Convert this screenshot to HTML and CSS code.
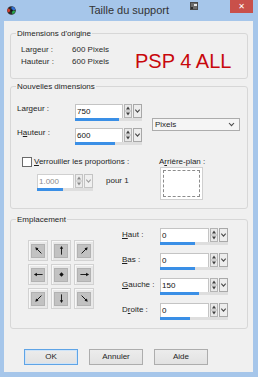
FILE: index.html
```html
<!DOCTYPE html>
<html lang="fr">
<head>
<meta charset="utf-8">
<title>Taille du support</title>
<link rel="stylesheet" href="styles.css">
</head>
<body>
<div class="window">
  <div class="titlebar">
    <div class="tb-left">
      <svg class="appicon" width="9" height="9" viewBox="0 0 9 9">
        <circle cx="4.5" cy="4.5" r="4.3" fill="#2b2b2b"/>
        <path d="M4.5 4.5 L4.5 0.6 A3.9 3.9 0 0 1 8.3 4 Z" fill="#2f6fd6"/>
        <path d="M4.5 4.5 L8.3 4.8 A3.9 3.9 0 0 1 5.5 8.3 Z" fill="#27a84a"/>
        <path d="M4.5 4.5 L1 6.5 A3.9 3.9 0 0 1 1 2.3 Z" fill="#d23b2c"/>
        <circle cx="4.5" cy="4.5" r="1.3" fill="#111"/>
      </svg>
    </div>
    <div class="title">Taille du support</div>
    <div class="tb-right">
      <svg class="helpicon" width="8" height="8" viewBox="0 0 8 8">
        <rect x="0" y="0" width="8" height="8" fill="#4a4a4a"/>
        <rect x="1" y="1" width="6" height="6" fill="#6d6d6d"/>
        <rect x="4" y="2" width="3" height="2" fill="#e8e8e8"/>
        <rect x="1" y="5" width="2" height="2" fill="#2e2e2e"/>
      </svg>
      <div class="close">✕</div>
    </div>
  </div>

  <div class="client">
    <fieldset class="group g1">
      <legend>Dimensions d'origine</legend>
      <div class="g1-body">
        <div class="orig">
          <span>Largeur :</span><span>600 Pixels</span>
          <span>Hauteur :</span><span>600 Pixels</span>
        </div>
        <div class="brand">PSP 4 ALL</div>
      </div>
    </fieldset>

    <fieldset class="group g2">
      <legend>Nouvelles dimensions</legend>
      <div class="g2-body">
        <div class="dims">
          <span class="lbl">Lar<u>g</u>eur :</span>
          <div class="ctl w67">
            <div class="ctl-top">
              <div class="field">750</div>
              <svg class="spin" width="8" height="14" viewBox="0 0 8 14"><rect x="0.5" y="0.5" width="7" height="13" fill="#e9e9e9" stroke="#b4b4b4"/><line x1="1" y1="7" x2="7" y2="7" stroke="#b4b4b4"/><path d="M4 2.5 L6 5.5 L2 5.5 Z" fill="#404040"/><path d="M2 8.5 L6 8.5 L4 11.5 Z" fill="#404040"/></svg>
              <svg class="drop" width="9" height="14" viewBox="0 0 9 14"><rect x="0.5" y="0.5" width="8" height="13" fill="#ededed" stroke="#a8a8a8"/><polyline points="2.3,5.6 4.5,8.2 6.7,5.6" fill="none" stroke="#4a4a4a" stroke-width="1.1"/></svg>
            </div>
            <div class="bar"><div class="fill" style="width:66%"></div></div>
          </div>
          <div class="select">
            <span>Pixels</span>
            <svg width="7" height="5" viewBox="0 0 7 5"><polyline points="1,1 3.5,3.7 6,1" fill="none" stroke="#4a4a4a" stroke-width="1.1"/></svg>
          </div>
          <span class="lbl">H<u>a</u>uteur :</span>
          <div class="ctl w67">
            <div class="ctl-top">
              <div class="field">600</div>
              <svg class="spin" width="8" height="14" viewBox="0 0 8 14"><rect x="0.5" y="0.5" width="7" height="13" fill="#e9e9e9" stroke="#b4b4b4"/><line x1="1" y1="7" x2="7" y2="7" stroke="#b4b4b4"/><path d="M4 2.5 L6 5.5 L2 5.5 Z" fill="#404040"/><path d="M2 8.5 L6 8.5 L4 11.5 Z" fill="#404040"/></svg>
              <svg class="drop" width="9" height="14" viewBox="0 0 9 14"><rect x="0.5" y="0.5" width="8" height="13" fill="#ededed" stroke="#a8a8a8"/><polyline points="2.3,5.6 4.5,8.2 6.7,5.6" fill="none" stroke="#4a4a4a" stroke-width="1.1"/></svg>
            </div>
            <div class="bar"><div class="fill" style="width:60%"></div></div>
          </div>
        </div>

        <div class="lower">
          <div class="lock">
            <div class="check-row">
              <span class="checkbox"></span>
              <span class="lbl"><u>V</u>errouiller les proportions :</span>
            </div>
            <div class="ratio-row">
              <div class="ctl w56 disabled">
                <div class="ctl-top">
                  <div class="field">1.000</div>
                  <svg class="spin" width="8" height="14" viewBox="0 0 8 14"><rect x="0.5" y="0.5" width="7" height="13" fill="#ececec" stroke="#c4c4c4"/><line x1="1" y1="7" x2="7" y2="7" stroke="#c4c4c4"/><path d="M4 2.5 L6 5.5 L2 5.5 Z" fill="#8a8a8a"/><path d="M2 8.5 L6 8.5 L4 11.5 Z" fill="#8a8a8a"/></svg>
                  <svg class="drop" width="9" height="14" viewBox="0 0 9 14"><rect x="0.5" y="0.5" width="8" height="13" fill="#f0f0f0" stroke="#c4c4c4"/><polyline points="2.3,5.6 4.5,8.2 6.7,5.6" fill="none" stroke="#a0a0a0" stroke-width="1.1"/></svg>
                </div>
                <div class="bar"><div class="fill" style="width:46%"></div></div>
              </div>
              <span class="pour">pour 1</span>
            </div>
          </div>
          <div class="bg">
            <span class="lbl">A<u>r</u>rière-plan :</span>
            <div class="swatch"><div class="swatch-in"></div></div>
          </div>
        </div>
      </div>
    </fieldset>

    <fieldset class="group g3">
      <legend>Emplacement</legend>
      <div class="g3-body">
        <div class="anchors">
          <div class="anchor"><div class="anchor-in"><svg width="11" height="11" viewBox="0 0 12 12"><g transform="rotate(315 6 6)"><line x1="6" y1="10.5" x2="6" y2="3" stroke="#111" stroke-width="1"/><path d="M6 1 L7.8 4.2 L4.2 4.2 Z" fill="#111"/></g></svg></div></div>
          <div class="anchor"><div class="anchor-in"><svg width="11" height="11" viewBox="0 0 12 12"><g><line x1="6" y1="10.5" x2="6" y2="3" stroke="#111" stroke-width="1"/><path d="M6 1 L7.8 4.2 L4.2 4.2 Z" fill="#111"/></g></svg></div></div>
          <div class="anchor"><div class="anchor-in"><svg width="11" height="11" viewBox="0 0 12 12"><g transform="rotate(45 6 6)"><line x1="6" y1="10.5" x2="6" y2="3" stroke="#111" stroke-width="1"/><path d="M6 1 L7.8 4.2 L4.2 4.2 Z" fill="#111"/></g></svg></div></div>
          <div class="anchor"><div class="anchor-in"><svg width="11" height="11" viewBox="0 0 12 12"><g transform="rotate(270 6 6)"><line x1="6" y1="10.5" x2="6" y2="3" stroke="#111" stroke-width="1"/><path d="M6 1 L7.8 4.2 L4.2 4.2 Z" fill="#111"/></g></svg></div></div>
          <div class="anchor"><div class="anchor-in"><svg width="11" height="11" viewBox="0 0 12 12"><path d="M6 3.6 L8.4 6 L6 8.4 L3.6 6 Z" fill="#111"/></svg></div></div>
          <div class="anchor"><div class="anchor-in"><svg width="11" height="11" viewBox="0 0 12 12"><g transform="rotate(90 6 6)"><line x1="6" y1="10.5" x2="6" y2="3" stroke="#111" stroke-width="1"/><path d="M6 1 L7.8 4.2 L4.2 4.2 Z" fill="#111"/></g></svg></div></div>
          <div class="anchor"><div class="anchor-in"><svg width="11" height="11" viewBox="0 0 12 12"><g transform="rotate(225 6 6)"><line x1="6" y1="10.5" x2="6" y2="3" stroke="#111" stroke-width="1"/><path d="M6 1 L7.8 4.2 L4.2 4.2 Z" fill="#111"/></g></svg></div></div>
          <div class="anchor"><div class="anchor-in"><svg width="11" height="11" viewBox="0 0 12 12"><g transform="rotate(180 6 6)"><line x1="6" y1="10.5" x2="6" y2="3" stroke="#111" stroke-width="1"/><path d="M6 1 L7.8 4.2 L4.2 4.2 Z" fill="#111"/></g></svg></div></div>
          <div class="anchor"><div class="anchor-in"><svg width="11" height="11" viewBox="0 0 12 12"><g transform="rotate(135 6 6)"><line x1="6" y1="10.5" x2="6" y2="3" stroke="#111" stroke-width="1"/><path d="M6 1 L7.8 4.2 L4.2 4.2 Z" fill="#111"/></g></svg></div></div>
        </div>

        <div class="margins">
          <span class="lbl"><u>H</u>aut :</span>
          <div class="ctl w68">
            <div class="ctl-top">
              <div class="field">0</div>
              <svg class="spin" width="8" height="14" viewBox="0 0 8 14"><rect x="0.5" y="0.5" width="7" height="13" fill="#e9e9e9" stroke="#b4b4b4"/><line x1="1" y1="7" x2="7" y2="7" stroke="#b4b4b4"/><path d="M4 2.5 L6 5.5 L2 5.5 Z" fill="#404040"/><path d="M2 8.5 L6 8.5 L4 11.5 Z" fill="#404040"/></svg>
              <svg class="drop" width="9" height="14" viewBox="0 0 9 14"><rect x="0.5" y="0.5" width="8" height="13" fill="#ededed" stroke="#a8a8a8"/><polyline points="2.3,5.6 4.5,8.2 6.7,5.6" fill="none" stroke="#4a4a4a" stroke-width="1.1"/></svg>
            </div>
            <div class="bar"><div class="fill" style="width:52%"></div></div>
          </div>
          <span class="lbl"><u>B</u>as :</span>
          <div class="ctl w68">
            <div class="ctl-top">
              <div class="field">0</div>
              <svg class="spin" width="8" height="14" viewBox="0 0 8 14"><rect x="0.5" y="0.5" width="7" height="13" fill="#e9e9e9" stroke="#b4b4b4"/><line x1="1" y1="7" x2="7" y2="7" stroke="#b4b4b4"/><path d="M4 2.5 L6 5.5 L2 5.5 Z" fill="#404040"/><path d="M2 8.5 L6 8.5 L4 11.5 Z" fill="#404040"/></svg>
              <svg class="drop" width="9" height="14" viewBox="0 0 9 14"><rect x="0.5" y="0.5" width="8" height="13" fill="#ededed" stroke="#a8a8a8"/><polyline points="2.3,5.6 4.5,8.2 6.7,5.6" fill="none" stroke="#4a4a4a" stroke-width="1.1"/></svg>
            </div>
            <div class="bar"><div class="fill" style="width:52%"></div></div>
          </div>
          <span class="lbl"><u>G</u>auche :</span>
          <div class="ctl w68">
            <div class="ctl-top">
              <div class="field">150</div>
              <svg class="spin" width="8" height="14" viewBox="0 0 8 14"><rect x="0.5" y="0.5" width="7" height="13" fill="#e9e9e9" stroke="#b4b4b4"/><line x1="1" y1="7" x2="7" y2="7" stroke="#b4b4b4"/><path d="M4 2.5 L6 5.5 L2 5.5 Z" fill="#404040"/><path d="M2 8.5 L6 8.5 L4 11.5 Z" fill="#404040"/></svg>
              <svg class="drop" width="9" height="14" viewBox="0 0 9 14"><rect x="0.5" y="0.5" width="8" height="13" fill="#ededed" stroke="#a8a8a8"/><polyline points="2.3,5.6 4.5,8.2 6.7,5.6" fill="none" stroke="#4a4a4a" stroke-width="1.1"/></svg>
            </div>
            <div class="bar"><div class="fill" style="width:57%"></div></div>
          </div>
          <span class="lbl">D<u>r</u>oite :</span>
          <div class="ctl w68">
            <div class="ctl-top">
              <div class="field">0</div>
              <svg class="spin" width="8" height="14" viewBox="0 0 8 14"><rect x="0.5" y="0.5" width="7" height="13" fill="#e9e9e9" stroke="#b4b4b4"/><line x1="1" y1="7" x2="7" y2="7" stroke="#b4b4b4"/><path d="M4 2.5 L6 5.5 L2 5.5 Z" fill="#404040"/><path d="M2 8.5 L6 8.5 L4 11.5 Z" fill="#404040"/></svg>
              <svg class="drop" width="9" height="14" viewBox="0 0 9 14"><rect x="0.5" y="0.5" width="8" height="13" fill="#ededed" stroke="#a8a8a8"/><polyline points="2.3,5.6 4.5,8.2 6.7,5.6" fill="none" stroke="#4a4a4a" stroke-width="1.1"/></svg>
            </div>
            <div class="bar"><div class="fill" style="width:44%"></div></div>
          </div>
        </div>
      </div>
    </fieldset>

    <div class="buttons">
      <button class="btn default">OK</button>
      <button class="btn">Annuler</button>
      <button class="btn">Aide</button>
    </div>
  </div>
</div>
</body>
</html>
```

FILE: styles.css
```css
* { box-sizing: border-box; }

html, body {
  margin: 0;
  padding: 0;
}

body {
  width: 258px;
  height: 377px;
  overflow: hidden;
  background: #a6c6ea;
  font-family: "Liberation Sans", Arial, sans-serif;
  font-size: 8px;
  color: #1e1e1e;
}

.window {
  display: flex;
  flex-direction: column;
  width: 258px;
  height: 377px;
}

/* Title bar */
.titlebar {
  height: 21px;
  display: grid;
  grid-template-columns: 1fr auto 1fr;
  align-items: start;
}

.tb-left {
  padding: 6px 0 0 7px;
  display: flex;
}

.title {
  font-size: 11px;
  line-height: 21px;
  color: #333;
  white-space: nowrap;
}

.tb-right {
  display: flex;
  justify-content: flex-end;
  align-items: flex-start;
  padding-right: 5px;
}

.helpicon {
  margin-top: 2px;
  margin-right: 32px;
}

.close {
  width: 23px;
  height: 13px;
  background: #c9504a;
  color: #fff;
  font-family: "DejaVu Sans", sans-serif;
  font-size: 8px;
  font-weight: bold;
  line-height: 13px;
  text-align: center;
}

/* Client area */
.client {
  flex: 1;
  margin: 0 5px 5px 4px;
  background: #f0f0f0;
  padding: 7px 5px 0 6px;
  display: flex;
  flex-direction: column;
}

.group {
  margin: 0;
  padding: 0;
  border: 1px solid #d7d7d7;
  border-radius: 3px;
  min-width: 0;
}

.group legend {
  margin-left: 5px;
  padding: 0 1px;
  font-size: 8px;
  line-height: 11px;
  color: #1e1e1e;
}

.lbl {
  line-height: 10px;
  white-space: nowrap;
}

u {
  text-decoration-thickness: 1px;
  text-underline-offset: 1px;
}

/* Group 1 */
.g1-body {
  height: 39px;
  padding: 5px 0 0 10px;
  display: flex;
  align-items: flex-start;
}

.orig {
  display: grid;
  grid-template-columns: 51px 63px;
  grid-auto-rows: 12px;
  line-height: 12px;
  color: #2a2a2a;
  white-space: nowrap;
}

.brand {
  margin-top: 7px;
  font-size: 20px;
  line-height: 20px;
  color: #c8080c;
  white-space: nowrap;
}

/* Group 2 */
.g2 { margin-top: 2px; }

.g2-body {
  height: 116px;
  padding: 12px 0 0 6px;
}

.dims {
  display: grid;
  grid-template-columns: 58px 77px 88px;
  grid-template-rows: 17px 17px;
  row-gap: 7px;
}

.dims .select {
  grid-column: 3;
  grid-row: 1 / span 2;
  align-self: center;
}

.select {
  height: 13px;
  border: 1px solid #acacac;
  background: #f5f5f5;
  display: flex;
  align-items: center;
  justify-content: space-between;
  padding: 0 4px 0 2px;
  line-height: 11px;
}

/* spin-edit control */
.ctl {
  display: flex;
  flex-direction: column;
}

.w67 { width: 67px; }
.w68 { width: 68px; }
.w56 { width: 56px; }

.ctl-top {
  display: flex;
  height: 14px;
  gap: 1px;
}

.field {
  flex: 1;
  background: #fff;
  border: 1px solid #c4c4c4;
  border-bottom: none;
  padding-left: 1px;
  font-size: 8px;
  line-height: 13px;
  color: #111;
}

.spin, .drop { flex: none; display: block; }

.bar {
  height: 3px;
  background: #dedede;
}

.fill {
  height: 100%;
  background: #3a8fe6;
}

.disabled .field {
  color: #8c8c8c;
  border-color: #d0d0d0;
}

/* lower part of group 2 */
.lower {
  margin-top: 12px;
  display: flex;
}

.lock {
  width: 142px;
}

.check-row {
  display: flex;
  align-items: center;
  gap: 2px;
  padding-left: 5px;
  height: 10px;
}

.checkbox {
  width: 10px;
  height: 10px;
  border: 1px solid #6a6a6a;
  background: #fff;
}

.ratio-row {
  margin-top: 7px;
  padding-left: 20px;
  display: flex;
  align-items: flex-start;
  gap: 13px;
}

.pour {
  line-height: 14px;
  white-space: nowrap;
}

.bg {
  display: flex;
  flex-direction: column;
  align-items: flex-start;
}

.swatch {
  margin-left: 1px;
  width: 43px;
  height: 33px;
  border: 1px solid #cfcfcf;
  background: #fff;
  padding: 2px;
}

.swatch-in {
  width: 100%;
  height: 100%;
  border: 1px dashed #8c8c8c;
}

/* Group 3 */
.g3 { margin-top: 5px; }

.g3-body {
  height: 103px;
  padding: 3px 0 0 17px;
  display: flex;
  align-items: flex-start;
}

.anchors {
  margin-top: 12px;
  display: grid;
  grid-template-columns: repeat(3, 20px);
  grid-template-rows: repeat(3, 21px);
  gap: 3px;
}

.anchor {
  border: 1px solid #d2d2d2;
  background: #e8e8e8;
  box-shadow: inset 1px 1px 0 #f8f8f8;
  display: flex;
  align-items: center;
  justify-content: center;
}

.anchor-in {
  width: 14px;
  height: 14px;
  background: #c2c2c2;
  border: 1px solid #b2b2b2;
  display: flex;
  align-items: center;
  justify-content: center;
}

.anchor-in svg { display: block; }

.margins {
  margin-left: 28px;
  display: grid;
  grid-template-columns: 38px 68px;
  grid-auto-rows: 17px;
  row-gap: 8px;
}

.margins .lbl {
  padding-top: 2px;
}

/* Buttons */
.buttons {
  margin-top: 20px;
  padding-left: 14px;
  display: flex;
  gap: 11px;
}

.btn {
  width: 54px;
  height: 16px;
  margin: 0;
  padding: 0;
  border: 1px solid #adadad;
  background: linear-gradient(#ececec, #e2e2e2);
  font-family: "Liberation Sans", Arial, sans-serif;
  font-size: 8px;
  color: #1e1e1e;
  line-height: 14px;
}

.btn.default {
  border-color: #5fa4e6;
  box-shadow: inset 0 0 0 1px #cfe4f8;
}
```
